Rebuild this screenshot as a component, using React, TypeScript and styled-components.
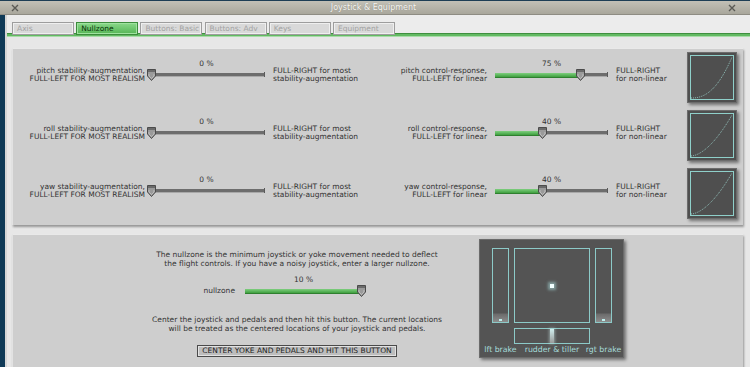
import React from "react";
import styled, { createGlobalStyle } from "styled-components";

const Global = createGlobalStyle`
  html, body { margin: 0; padding: 0; background: #0f3a57; }
  body {
    font-family: "DejaVu Sans", "Liberation Sans", sans-serif;
    font-size: 7.5px;
    color: #333;
    overflow: hidden;
  }
`;

const Window = styled.div`
  width: 750px;
  height: 367px;
  overflow: hidden;
  display: flex;
  flex-direction: column;
  background: #0f3a57;
`;

const TitleBar = styled.div`
  height: 13px;
  border-top: 1px solid #1d3e55;
  background: linear-gradient(#c2c0b6, #a9a79c);
  border-bottom: 1px solid #8e8c83;
  display: flex;
  align-items: center;
  justify-content: space-between;
  padding: 0 14px 0 11px;
  box-sizing: content-box;
`;

const Title = styled.div`
  color: #f6f6f2;
  font-size: 8px;
  text-shadow: 0 0 1px rgba(0, 0, 0, 0.25);
`;

const Body = styled.div`
  flex: 1;
  display: flex;
  min-height: 0;
`;

const Edge = styled.div`
  width: 5px;
  background: #0f3a57;
`;

const Content = styled.div`
  flex: 1;
  background: #e7e7e7;
  display: flex;
  flex-direction: column;
  border-left: 2px solid #d6d6d6;
`;

const TabArea = styled.div`
  padding: 7px 0 0 5px;
  display: flex;
  flex-direction: column;
  background: #ececec;
`;

const Tabs = styled.div`
  display: flex;
  gap: 2.2px;
  position: relative;
  z-index: 1;
`;

const Tab = styled.div<{ $active?: boolean }>`
  width: 62px;
  height: 13px;
  box-sizing: border-box;
  border: 1px solid ${(p) => (p.$active ? "#3c8c3c" : "#9d9d9d")};
  background: ${(p) =>
    p.$active ? "linear-gradient(#8ad88a, #55b555)" : "#d9d9d9"};
  box-shadow: inset 0 0 0 1px ${(p) => (p.$active ? "#9fe29f" : "#efefef")};
  color: ${(p) => (p.$active ? "#0b350b" : "#a3a3a3")};
  padding-left: 4px;
  line-height: 11px;
  white-space: nowrap;
  overflow: hidden;
`;

const GreenLine = styled.div`
  height: 2px;
  margin-top: -2px;
  margin-left: -5px;
  background: #62b962;
  border-top: 1px solid #3f8f3f;
  border-bottom: 1px solid #a8dca8;
`;

const Panel = styled.div`
  margin: 11px 7px 0 5px;
  background: #cecece;
  border-top: 1px solid #e9e9e9;
  border-left: 1px solid #e2e2e2;
  box-shadow: 1px 2px 2px rgba(0, 0, 0, 0.35);
`;

const TopPanel = styled(Panel)`
  padding: 3px 6px 6px 0;
  display: flex;
  flex-direction: column;
  gap: 7px;
`;

const Row = styled.div`
  display: flex;
  height: 51px;
  align-items: flex-start;
`;

const Controls = styled.div`
  display: flex;
  align-items: flex-start;
  margin-top: 7px;
`;

const Label = styled.div<{ $w: number; $right?: boolean; $ml?: number }>`
  width: ${(p) => p.$w}px;
  margin-left: ${(p) => p.$ml ?? 0}px;
  margin-top: 8px;
  text-align: ${(p) => (p.$right ? "right" : "left")};
  line-height: 8px;
  white-space: nowrap;
  color: #333;
`;

const SliderWrap = styled.div<{ $w: number; $ml: number }>`
  width: ${(p) => p.$w}px;
  margin-left: ${(p) => p.$ml}px;
  display: flex;
  flex-direction: column;
`;

const Percent = styled.div`
  height: 10px;
  line-height: 10px;
  text-align: center;
  color: #333;
`;

const TrackArea = styled.div`
  position: relative;
  height: 12px;
  display: flex;
  align-items: center;
`;

const Bar = styled.div`
  position: relative;
  width: 100%;
  height: 3px;
  background: #6d6d6d;
  border-bottom: 1px solid #a9a9a9;
  &::after {
    content: "";
    position: absolute;
    right: 0;
    top: -1px;
    width: 1px;
    height: 5px;
    background: #5a5a5a;
  }
`;

const Fill = styled.div`
  height: 4px;
  margin-top: -0.5px;
  background: linear-gradient(#7fcf7f, #3f9f3f);
  border-bottom: 1px solid #2f7f2f;
`;

const ThumbBox = styled.div`
  position: absolute;
  top: 0;
  width: 9px;
  height: 12px;
`;

const GraphBox = styled.div`
  width: 50px;
  height: 51px;
  margin-left: 7px;
  box-sizing: border-box;
  background: #4f4f4f;
  border: 1px solid #6c6c6c;
  box-shadow: 2px 2px 3px rgba(0, 0, 0, 0.45);
  display: flex;
`;

const BottomPanel = styled(Panel)`
  margin-top: 9px;
  flex: 1;
  padding-left: 102px;
  display: flex;
  align-items: flex-start;
`;

const Column = styled.div`
  width: 364px;
  display: flex;
  flex-direction: column;
  align-items: center;
`;

const Para = styled.div<{ $mt: number }>`
  margin-top: ${(p) => p.$mt}px;
  text-align: center;
  line-height: 9px;
  color: #333;
  white-space: nowrap;
`;

const NullRow = styled.div`
  align-self: stretch;
  display: flex;
  align-items: flex-start;
  padding-left: 88px;
  margin-top: 7px;
`;

const NullLabel = styled.div`
  width: 32px;
  margin-top: 12px;
  line-height: 8px;
  text-align: right;
`;

const Button = styled.div`
  margin-top: 12px;
  width: 200px;
  height: 12px;
  box-sizing: border-box;
  border: 1px solid #4a4a4a;
  background: #bdbdbd;
  box-shadow: inset 0 0 0 1px #e2e2e2;
  text-align: center;
  line-height: 10px;
  color: #222;
  white-space: nowrap;
`;

const Viz = styled.div`
  flex: none;
  margin-top: 4px;
  width: 145px;
  height: 119px;
  box-sizing: border-box;
  background: #545454;
  border: 1px solid #6b6b6b;
  box-shadow: 2px 2px 3px rgba(0, 0, 0, 0.45);
  padding: 8px 0 0 12px;
  display: grid;
  grid-template-columns: 17px 76px 17px;
  grid-template-rows: 75px 16px 9px;
  column-gap: 5px;
  row-gap: 5px;
  align-content: start;
`;

const Brake = styled.div`
  position: relative;
  border: 1px solid #8ccac8;
  background: linear-gradient(to top, #8d8d8d 0, #6b6b6b 8px, #545454 9px);
  &::after {
    content: "";
    position: absolute;
    left: 50%;
    bottom: 1px;
    width: 3px;
    height: 2px;
    margin-left: -1.5px;
    background: #bff0ee;
  }
`;

const Square = styled.div`
  border: 1px solid #8ccac8;
  display: flex;
  align-items: center;
  justify-content: center;
`;

const Dot = styled.div`
  width: 4px;
  height: 4px;
  background: #f2ffff;
  box-shadow: 0 0 3px 2px rgba(170, 220, 220, 0.55);
`;

const Rudder = styled.div`
  grid-column: 2;
  grid-row: 2;
  border: 1px solid #8ccac8;
  display: flex;
  justify-content: center;
`;

const RudderGlow = styled.div`
  width: 4px;
  background: linear-gradient(#cfeeee, #9a9a9a);
  box-shadow: 0 0 3px 1px rgba(200, 230, 230, 0.5);
`;

const VizLabel = styled.div<{ $col: number }>`
  grid-column: ${(p) => p.$col};
  grid-row: 3;
  margin-top: -4px;
  display: flex;
  justify-content: center;
  white-space: nowrap;
  color: #a6dcda;
  font-size: 7.8px;
  line-height: 9px;
`;

const XIcon = () => (
  <svg width="8" height="8" viewBox="0 0 8 8">
    <path d="M1 1 L7 7 M7 1 L1 7" stroke="#5a5a55" strokeWidth="1.4" />
  </svg>
);

const Thumb = () => (
  <svg width="9" height="12" viewBox="0 0 9 12">
    <path
      d="M0.5 0.5 H8.5 V7 L4.5 11.5 L0.5 7 Z"
      fill="#9a9a9a"
      stroke="#4b4b4b"
      strokeWidth="1"
    />
    <rect x="1" y="1" width="7" height="2" fill="#6a6a6a" />
    <path d="M2 5 V7 L4.5 9.5 L7 7 V5" fill="none" stroke="#c6c6c6" strokeWidth="0.8" />
  </svg>
);

function Slider({
  w,
  ml,
  value,
  text,
  green,
}: {
  w: number;
  ml: number;
  value: number;
  text: string;
  green?: boolean;
}) {
  const left = value * (w - 4) - 1;
  return (
    <SliderWrap $w={w} $ml={ml}>
      <Percent>{text}</Percent>
      <TrackArea>
        <Bar>{green && <Fill style={{ width: left + 4 }} />}</Bar>
        <ThumbBox style={{ left }}>
          <Thumb />
        </ThumbBox>
      </TrackArea>
    </SliderWrap>
  );
}

function Graph({ value }: { value: number }) {
  const k = 1 + value * 1.8;
  const pts: string[] = [];
  for (let i = 0; i <= 40; i++) {
    const x = i / 40;
    const y = Math.pow(x, k);
    pts.push(`${(3 + x * 41).toFixed(2)},${(45 - y * 41).toFixed(2)}`);
  }
  return (
    <GraphBox>
      <svg width="48" height="49" viewBox="0 0 48 49">
        <rect x="2.5" y="2.5" width="43" height="44" fill="none" stroke="#8fd0ca" strokeWidth="1" />
        <polyline
          points={pts.join(" ")}
          fill="none"
          stroke="#9fd8d2"
          strokeWidth="0.8"
          strokeDasharray="1 1"
        />
      </svg>
    </GraphBox>
  );
}

const rows = [
  { axis: "pitch", stab: 0, resp: 0.75 },
  { axis: "roll", stab: 0, resp: 0.4 },
  { axis: "yaw", stab: 0, resp: 0.4 },
];

const tabs = ["Axis", "Nullzone", "Buttons: Basic", "Buttons: Adv", "Keys", "Equipment"];

export default function App() {
  return (
    <>
      <Global />
      <Window>
        <TitleBar>
          <XIcon />
          <Title>Joystick &amp; Equipment</Title>
          <XIcon />
        </TitleBar>
        <Body>
          <Edge />
          <Content>
            <TabArea>
              <Tabs>
                {tabs.map((t) => (
                  <Tab key={t} $active={t === "Nullzone"}>
                    {t}
                  </Tab>
                ))}
              </Tabs>
              <GreenLine />
            </TabArea>
            <TopPanel>
              {rows.map((r) => (
                <Row key={r.axis}>
                  <Controls>
                    <Label $w={132} $right>
                      {r.axis} stability-augmentation,
                      <br />
                      FULL-LEFT FOR MOST REALISM
                    </Label>
                    <Slider w={117} ml={3} value={r.stab} text={`${Math.round(r.stab * 100)} %`} />
                    <Label $w={107} $ml={8}>
                      FULL-RIGHT for most
                      <br />
                      stability-augmentation
                    </Label>
                    <Label $w={107} $right>
                      {r.axis} control-response,
                      <br />
                      FULL-LEFT for linear
                    </Label>
                    <Slider w={113} ml={8} value={r.resp} green text={`${Math.round(r.resp * 100)} %`} />
                    <Label $w={64} $ml={8}>
                      FULL-RIGHT
                      <br />
                      for non-linear
                    </Label>
                  </Controls>
                  <Graph value={r.resp} />
                </Row>
              ))}
            </TopPanel>
            <BottomPanel>
              <Column>
                <Para $mt={15}>
                  The nullzone is the minimum joystick or yoke movement needed to deflect
                  <br />
                  the flight controls. If you have a noisy joystick, enter a larger nullzone.
                </Para>
                <NullRow>
                  <NullLabel>nullzone</NullLabel>
                  <Slider w={117} ml={10} value={1} green text="10 %" />
                </NullRow>
                <Para $mt={18}>
                  Center the joystick and pedals and then hit this button. The current locations
                  <br />
                  will be treated as the centered locations of your joystick and pedals.
                </Para>
                <Button>CENTER YOKE AND PEDALS AND HIT THIS BUTTON</Button>
              </Column>
              <Viz>
                <Brake />
                <Square>
                  <Dot />
                </Square>
                <Brake />
                <Rudder>
                  <RudderGlow />
                </Rudder>
                <VizLabel $col={1}>lft brake</VizLabel>
                <VizLabel $col={2}>rudder &amp; tiller</VizLabel>
                <VizLabel $col={3}>rgt brake</VizLabel>
              </Viz>
            </BottomPanel>
          </Content>
        </Body>
      </Window>
    </>
  );
}
